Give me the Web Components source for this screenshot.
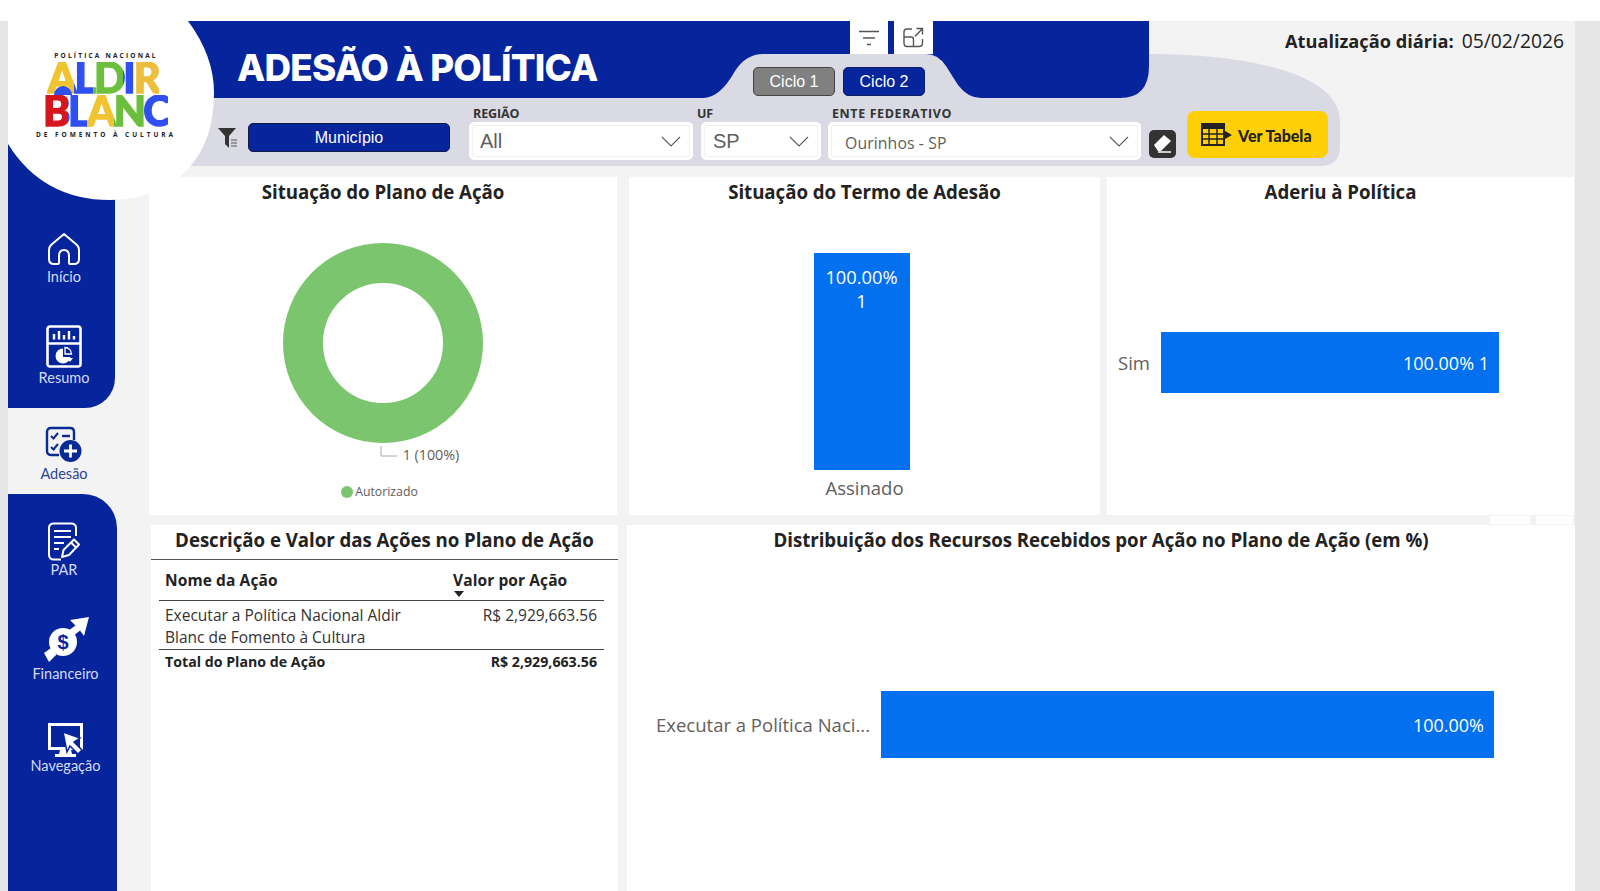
<!DOCTYPE html>
<html lang="pt-BR"><head><meta charset="utf-8"><title>Adesão à Política</title>
<style>
html,body{margin:0;height:891px;overflow:hidden;background:#fff;font-family:"Open Sans","Noto Sans",sans-serif}
</style></head><body>
<app-shell>
  <side-nav slot="nav">
    <nav-item label="Início" icon="home"></nav-item>
    <nav-item label="Resumo" icon="resumo"></nav-item>
    <nav-item slot="active" label="Adesão" icon="adesao" active></nav-item>
    <nav-item slot="lower" label="PAR" icon="par"></nav-item>
    <nav-item slot="lower" label="Financeiro" icon="fin"></nav-item>
    <nav-item slot="lower" label="Navegação" icon="nav"></nav-item>
  </side-nav>
  <top-header slot="head"></top-header>
  <top-cards slot="row1">
    <chart-card heading="Situação do Plano de Ação"><donut-chart></donut-chart></chart-card>
    <chart-card heading="Situação do Termo de Adesão"><column-chart></column-chart></chart-card>
    <chart-card heading="Aderiu à Política"><hbar-chart label="Sim" value="100.00% 1" lw="43" bw="338" top="127" h="61" lgap="11"></hbar-chart></chart-card>
  </top-cards>
  <bottom-cards slot="row2">
    <chart-card heading="Descrição e Valor das Ações no Plano de Ação" compact><action-table></action-table></chart-card>
    <chart-card heading="Distribuição dos Recursos Recebidos por Ação no Plano de Ação (em %)"><hbar-chart label="Executar a Política Naci..." value="100.00%" lw="243" bw="613" top="138" h="67" lgap="11"></hbar-chart></chart-card>
  </bottom-cards>
</app-shell>
<script>
const ICONS={
home:`<svg width="34" height="34" viewBox="0 0 34 34" fill="none" stroke="#fff" stroke-width="2" stroke-linejoin="round"><path d="M17 2 L4 13 Q2 15 2 18 V27 Q2 32 7 32 H11 Q12 32 12 31 V24 Q12 18 17 18 Q22 18 22 24 V31 Q22 32 23 32 H27 Q32 32 32 27 V18 Q32 15 30 13 Z"/></svg>`,
resumo:`<svg width="36" height="43" viewBox="0 0 36 43" fill="none"><rect x="1.5" y="1.5" width="33" height="40" rx="2.5" stroke="#fff" stroke-width="2.6"/><path d="M1.5 18.5H34.5" stroke="#fff" stroke-width="2.6"/><path d="M8 14.500V9M13 14.500V6M18 14.500V10M23 14.500V6M28 14.500V11" stroke="#fff" stroke-width="2.400"/><path d="M17 23.500a7.500 7.500 0 1 0 7.500 8.500H17Z" fill="#fff"/><path d="M19 22.500a6.500 6.500 0 0 1 6.500 6.500H19Z" stroke="#fff" stroke-width="1.300"/><path d="M21 33h6l-3 4Z" fill="#fff"/></svg>`,
adesao:`<svg width="38" height="37" viewBox="0 0 38 37" fill="none"><path d="M14 29H6Q2 29 2 25V6Q2 2 6 2H25Q29 2 29 6V14" stroke="#0a2a94" stroke-width="2.400"/><path d="M6 10l2.500 2.500L13 7M6 21l2.500 2.500L13 18" stroke="#0a2a94" stroke-width="2"/><path d="M17 10h8" stroke="#0a2a94" stroke-width="2.400"/><circle cx="25.500" cy="25" r="11" fill="#0a2a94"/><path d="M25.500 18.500v13M19 25h13" stroke="#fff" stroke-width="2.800"/></svg>`,
par:`<svg width="34" height="39" viewBox="0 0 34 39" fill="none" stroke="#fff" stroke-width="2"><path d="M14 37.500H7Q2 37.500 2 32.500V6Q2 1.500 7 1.500H24Q29 1.500 29 6V14"/><path d="M7 9H24M7 15H24M7 21H17M7 27H12" stroke-width="2.200"/><path d="M15 35l1.500-7L27 17.500l5 5L22 33Z" stroke-linejoin="round"/><path d="M24 20.500l5 5"/></svg>`,
fin:`<svg width="50" height="50" viewBox="0 0 50 50"><path d="M48 5L29 8 34.500 13.500 26 19.500 31 25 39 18.500 43 24Z" fill="#fff"/><path d="M10 36l5 7-5 3Z" fill="#fff"/><circle cx="22" cy="30" r="14" fill="#fff"/><text x="22" y="37" text-anchor="middle" font-family="Liberation Sans,sans-serif" font-weight="700" font-size="20" fill="#06249c">$</text><path d="M3 41L10 36 15 43 8 50Z" fill="#fff"/></svg>`,
nav:`<svg width="37" height="35" viewBox="0 0 37 35"><path d="M1 0H36V27H1Z" fill="#fff"/><path d="M4 3H33V24H4Z" fill="#06249c"/><path d="M13 27H24L25 31H29V34H8V31H12Z" fill="#fff"/><path d="M16 9L33 15 27 19 35 27 31 31 23 23 20 29Z" fill="#fff" stroke="#06249c" stroke-width="1.500"/></svg>`};
function def(name,fn){customElements.define(name,class extends HTMLElement{constructor(){super();this.attachShadow({mode:"open"})}connectedCallback(){this.shadowRoot.innerHTML=fn(this)}})}
def("app-shell",()=>`<style>
:host{display:grid;grid-template-columns:8px 1567px 25px;padding-top:21px;height:870px;overflow:hidden}
.strip{background:#e6e6e6}
.main{background:#f3f3f4;display:grid;grid-template-columns:141px 1fr;grid-template-rows:156px 1fr;position:relative;overflow:hidden}
.nav{grid-row:1/3;grid-column:1;z-index:1}
.head{grid-row:1;grid-column:1/3;z-index:2}
.body{grid-row:2;grid-column:2;display:flex;flex-direction:column;gap:10px;z-index:1}
</style>
<div class="strip"></div>
<div class="main"><div class="head"><slot name="head"></slot></div><div class="nav"><slot name="nav"></slot></div><div class="body"><slot name="row1"></slot><slot name="row2"></slot></div></div>
<div class="strip"></div>`);
def("side-nav",()=>`<style>
:host{display:flex;flex-direction:column;width:109px;height:870px}
.upper{background:#06249c;width:107px;height:387px;border-radius:0 0 30px 0;box-sizing:border-box;padding-top:211px;display:flex;flex-direction:column;gap:21px}
.mid{height:86px;box-sizing:border-box;padding-top:18px;width:107px}
.lower{background:#06249c;flex:1;border-radius:0 34px 0 0;box-sizing:border-box;padding-top:28px;display:flex;flex-direction:column}
</style><div class="upper"><slot></slot></div><div class="mid"><slot name="active"></slot></div><div class="lower"><slot name="lower"></slot></div>`);
def("nav-item",e=>{const a=e.hasAttribute("active"),l=e.getAttribute("label");
const total={"Início":72,"Resumo":73,"Adesão":56,"PAR":90,"Financeiro":111,"Navegação":73}[l];
const gap={"Início":3,"Resumo":2,"Adesão":3,"PAR":1,"Financeiro":4,"Navegação":0}[l];
const wide=l==="Financeiro"||l==="Navegação";
return `<style>
:host{display:block;height:${total}px}
.i{display:flex;flex-direction:column;align-items:center;font:400 14.500px/16px Lato,"Open Sans",sans-serif;color:${a?"#2b4497":"#d5dcf6"};width:${wide?115:112}px}
span{margin-top:${gap}px}
svg{display:block}
</style><div class="i">${ICONS[e.getAttribute("icon")]}<span>${l}</span></div>`});
function wordStyle(word,colors,target,size){
  const fam=`900 ${size}px Lato`,c=document.createElement("canvas").getContext("2d");c.font=fam;
  const ws=[...word].map(ch=>c.measureText(ch).width),sum=ws.reduce((a,b)=>a+b,0),ls=(target-sum)/word.length;
  let p=0;const stops=ws.map((w,i)=>{const s=`${colors[i]} ${p}px ${p+w+ls}px`;p+=w+ls;return s}).join(",");
  return `font:${fam};line-height:31px;letter-spacing:${ls}px;background-image:linear-gradient(90deg,${stops});`;
}
def("logo-mark",()=>`<style>
:host{display:block;width:140px;position:relative;text-align:center}
.t{font:700 6.500px/8px "Open Sans",sans-serif;letter-spacing:2.200px;color:#222;white-space:nowrap}
.w{display:block;height:31px;white-space:nowrap;font-kerning:none}
.w span{display:block;width:max-content;margin:0 auto;padding-bottom:2px;font-kerning:none;-webkit-background-clip:text;background-clip:text;-webkit-text-fill-color:transparent;color:transparent;-webkit-text-stroke:1.400px transparent}
.arch{position:absolute;left:18px;top:34px;width:18px;height:9px;background:#2f4ff0;border-radius:9px 9px 0 0}
</style><div class="t">POLÍTICA NACIONAL</div>
<div class="w" style="margin-top:2px;margin-left:-6px"><span style="${wordStyle("ALDIR",["#f0c330","#2f4ff0","#6cbf3c","#2f4ff0","#eebd3c"],111,41.5)}">ALDIR</span></div>
<div class="w" style="margin-top:2px;margin-left:-1px"><span style="${wordStyle("BLANC",["#d6141b","#2f4ff0","#f0c330","#6cbf3c","#2f4ff0"],125,41.5)}">BLANC</span></div>
<div class="t" style="letter-spacing:2.950px;margin-top:5px;margin-left:-5px;margin-right:-5px">DE FOMENTO À CULTURA</div><div class="arch"></div>`);
def("top-header",()=>`<style>
:host{display:block;position:relative;height:156px;font-family:"Liberation Sans",sans-serif}
.shapes{position:absolute;left:0;top:0;pointer-events:none;overflow:visible}
.row{position:relative;display:flex}
.titlebar{height:77px;padding-left:229px;box-sizing:border-box;align-items:center}
h1{margin:0;font:800 36.800px/1 Inter,sans-serif;color:#fff;letter-spacing:-.8px;white-space:nowrap;padding-top:18px}
.tools{position:absolute;left:842px;top:0;display:flex;gap:6px}
.tool{width:38px;height:33px;background:#fff;display:flex;align-items:center;justify-content:center}
.tool+.tool{width:39px}
.date{position:absolute;left:1277px;top:8px;font:400 19.300px/24px "Open Sans",sans-serif;color:#222;white-space:nowrap}
.date b{font-weight:700;font-size:18.200px;margin-right:3px}
.cycles{position:absolute;left:745px;top:46px;display:flex;gap:8px}
.filters{position:absolute;left:0;top:77px;height:68px;width:100%}
.frow{display:flex;align-items:flex-start;padding-left:209px;height:100%}
.funnel{margin-top:30px;width:22px}
.mun{margin:25px 0 0 9px;width:202px;height:29px;background:#06249c;border:1px solid #111b4a;border-radius:5px;box-sizing:border-box;color:#fff;font-size:16px;display:flex;align-items:center;justify-content:center}
.eraser{margin:32px 0 0 8px;flex:none}
.ver{margin:13px 0 0 11px;width:141px;height:47px;background:#ffcf06;border-radius:8px;display:flex;align-items:center;gap:6px;padding-left:14px;box-sizing:border-box;font:900 16px Lato,sans-serif;color:#222;white-space:nowrap}
.ver span{padding-top:1px}
</style>
<svg class="shapes" width="1340" height="156" viewBox="0 0 1340 156">
<path d="M170 77H695V33H1141C1232 33 1332 50 1332 100V125Q1332 145 1312 145H170Z" fill="#d9dae3"/>
<path d="M170 0H1141V45Q1141 77 1112 77H973Q960 77 950 64L938 45Q930 33 918 33H755Q738 33 727 50Q712 77 695 77H170Z" fill="#06249c"/>
<path d="M0 0H180Q206 35 206 72Q206 120 180 148Q150 179 102 179Q35 179 0 123Z" fill="#fff"/>
</svg>
<div class="row titlebar"><h1>ADESÃO À POLÍTICA</h1></div>
<div style="position:absolute;left:28px;top:31px"><logo-mark></logo-mark></div>
<div class="tools"><div class="tool"><svg width="20" height="16" viewBox="0 0 20 16" fill="none" stroke="#555" stroke-width="1.300"><path d="M0 1.500H20M4 8H16M8 14.500H12"/></svg></div><div class="tool"><svg width="21" height="21" viewBox="0 0 21 21" fill="none" stroke="#555" stroke-width="1.400"><path d="M9 2H4Q1 2 1 5V16Q1 19.500 4 19.500H16Q19.500 19.500 19.500 16V12M1 10H8Q10.500 10 10.500 12.500V19.500M12 9.500L19.500 1.500M13.500 1.500H19.500V7.500"/></svg></div></div>
<div class="date"><b>Atualização diária:</b> 05/02/2026</div>
<div class="cycles"><cycle-btn>Ciclo 1</cycle-btn><cycle-btn on>Ciclo 2</cycle-btn></div>
<div class="filters"><div class="frow">
<svg class="funnel" width="20" height="20" viewBox="0 0 20 20"><path d="M0 0H18L11 8V20L7 16V8Z" fill="#333"/><path d="M13 12h6M13 15h6M13 18h6" stroke="#555" stroke-width="1"/></svg>
<div class="mun">Município</div>
<select-box label="REGIÃO" value="All" w="224" ml="19" lp="4" pad="11"></select-box>
<select-box label="UF" value="SP" w="120" ml="8" lp="-4" pad="12"></select-box>
<select-box label="ENTE FEDERATIVO" value="Ourinhos - SP" w="313" ml="7" lp="4" pad="17" small></select-box>
<svg class="eraser" width="27" height="28" viewBox="0 0 27 28"><rect width="27" height="28" rx="5" fill="#333"/><path d="M5 15L15 5l7 6-10 10H9Z" fill="#fff"/><path d="M9 22h13" stroke="#fff" stroke-width="1.500"/></svg>
<div class="ver"><svg width="31" height="23" viewBox="0 0 31 23"><path d="M1 1H23V22H1Z" fill="none" stroke="#222" stroke-width="2"/><path d="M1 1H23V6H1Z" fill="#222"/><path d="M1 11H23M1 16H23M8 6V22M16 6V22" stroke="#222" stroke-width="1.500"/><path d="M24 8l7 4-7 4Z" fill="#222"/></svg><span>Ver Tabela</span></div>
</div></div>`);
def("cycle-btn",e=>{const on=e.hasAttribute("on");return `<style>
:host{display:block;width:82px;height:29px;box-sizing:border-box;border:1px solid ${on?"#0c1f66":"#444"};border-radius:5px;background:${on?"#06249c":"#808080"};color:#fff;font:400 16px/27px "Liberation Sans",sans-serif;text-align:center}
</style><slot></slot>`});
def("select-box",e=>{const small=e.hasAttribute("small"),w=+e.getAttribute("w");return `<style>
:host{display:block;width:${w}px;margin-left:${e.getAttribute("ml")}px;flex:none}
.l{font:700 12.500px/15px "Open Sans",sans-serif;color:#333;height:15px;margin-top:8px;padding-left:${Math.max(0,+e.getAttribute("lp"))}px;margin-left:${Math.min(0,+e.getAttribute("lp"))}px;white-space:nowrap;letter-spacing:${small?".6px":"-.1px"}}
.b{margin-top:1px;height:38px;background:#fff;border-radius:5px;box-sizing:border-box;padding:0 6px 0 ${e.getAttribute("pad")}px;display:flex;align-items:center;justify-content:space-between;color:#605e5c;font:${small?'400 15.800px "Open Sans"':'400 20px "Liberation Sans"'},sans-serif;outline:1px solid #f1f1f3;outline-offset:-4px}
.b span{${small?"padding-top:4px;letter-spacing:.1px":""}}
svg{flex:none;margin-right:6px}
</style><div class="l">${e.getAttribute("label")}</div><div class="b"><span>${e.getAttribute("value")}</span><svg width="20" height="11" viewBox="0 0 20 11" fill="none" stroke="#605e5c" stroke-width="1.100"><path d="M1 1l9 9 9-9"/></svg></div>`});
def("top-cards",()=>`<style>
:host{display:grid;grid-template-columns:468px 471px 458px;column-gap:12px;height:338px}
::slotted(:nth-child(3)){margin-left:-5px;width:467px}
</style><slot></slot>`);
def("bottom-cards",()=>`<style>
:host{display:grid;grid-template-columns:467px 1fr;column-gap:9px;height:366px;margin-left:2px;width:1424px;position:relative}
:host::before,:host::after{content:"";position:absolute;top:-9px;height:8px;background:#fff;width:40px}
:host::before{left:1339px}
:host::after{left:1385px;width:37px}
</style><slot></slot>`);
def("chart-card",e=>`<style>
:host{display:block;background:#fff;position:relative;overflow:hidden;height:100%;box-sizing:border-box}
h2{margin:0;text-align:center;font:700 18.700px/26px "Open Sans",sans-serif;color:#222;padding-top:2px;letter-spacing:-.05px;white-space:nowrap}
</style><h2>${e.getAttribute("heading")}</h2><slot></slot>`);
def("donut-chart",()=>`<style>
:host{display:block;height:310px;font-family:"Open Sans",sans-serif;color:#605e5c}
.c{display:flex;flex-direction:column;align-items:center}
.d{display:block;margin-top:38px}
.lab{font-size:14.300px;line-height:18px;margin:3px 0 0 73px;display:flex;align-items:flex-start;gap:5px}
.lab svg{display:block}
.leg{font-size:12.300px;line-height:18px;margin:19px 0 0 -7px;display:flex;align-items:center;gap:2px}
.dot{width:12px;height:12px;background:#7ac56e;border-radius:50%}
</style><div class="c"><svg class="d" width="200" height="200" viewBox="0 0 200 200"><circle cx="100" cy="100" r="80" fill="none" stroke="#7ac56e" stroke-width="40"/></svg>
<div class="lab"><svg width="18" height="12" viewBox="0 0 18 12" fill="none" stroke="#aaa"><path d="M1 0V10H17"/></svg><span>1 (100%)</span></div>
<div class="leg"><span class="dot"></span><span>Autorizado</span></div></div>`);
def("column-chart",()=>`<style>
:host{display:block;height:310px;font-family:"Open Sans",sans-serif}
.c{display:flex;flex-direction:column;align-items:center;padding-top:48px}
.bar{width:96px;height:217px;background:#0270ef;color:#fff;text-align:center;font-size:18.300px;line-height:24px;padding-top:12px;box-sizing:border-box;margin-left:-6px}
.x{font-size:18.500px;line-height:26px;color:#605e5c;margin-top:5px}
</style><div class="c"><div class="bar">100.00%<br>1</div><div class="x">Assinado</div></div>`);
def("hbar-chart",e=>`<style>
:host{display:block;font-family:"Open Sans",sans-serif;height:300px}
.r{display:flex;align-items:center;margin-top:${e.getAttribute("top")}px;height:${e.getAttribute("h")}px}
.l{width:${e.getAttribute("lw")}px;text-align:right;color:#665e59;font-size:18.500px;white-space:nowrap;flex:none}
.b{margin-left:${e.getAttribute("lgap")}px;width:${e.getAttribute("bw")}px;height:100%;background:#0270ef;color:#fff;font-size:18px;display:flex;align-items:center;justify-content:flex-end;padding-right:10px;box-sizing:border-box;flex:none}
</style><div class="r"><div class="l">${e.getAttribute("label")}</div><div class="b">${e.getAttribute("value")}</div></div>`);
def("action-table",()=>`<style>
:host{display:block;font-family:"Open Sans",sans-serif;color:#222;border-top:1.500px solid #555;margin-top:6px;padding:0 14px 0 8px}
.h{font-weight:700;font-size:15.500px;line-height:20px;height:41px;box-sizing:border-box;padding:10px 0 0 6px;border-bottom:1.500px solid #444;position:relative;letter-spacing:.1px}
.h .v{position:absolute;left:294px;top:10px}
.h i{position:absolute;left:295px;top:31px;border:5.500px solid transparent;border-top:6px solid #222;border-bottom:0}
.d{font-size:15.500px;line-height:21.500px;color:#333;padding:4px 7px 0 6px;height:49px;box-sizing:border-box;border-bottom:1.500px solid #444;display:flex;justify-content:space-between}
.t{font-size:14.200px;font-weight:700;line-height:20px;padding:2px 7px 0 6px;display:flex;justify-content:space-between}
</style><div class="h">Nome da Ação<span class="v">Valor por Ação</span><i></i></div>
<div class="d"><span>Executar a Política Nacional Aldir<br>Blanc de Fomento à Cultura</span><span>R$ 2,929,663.56</span></div>
<div class="t"><span>Total do Plano de Ação</span><span>R$ 2,929,663.56</span></div>`);
</script>
</body></html>
